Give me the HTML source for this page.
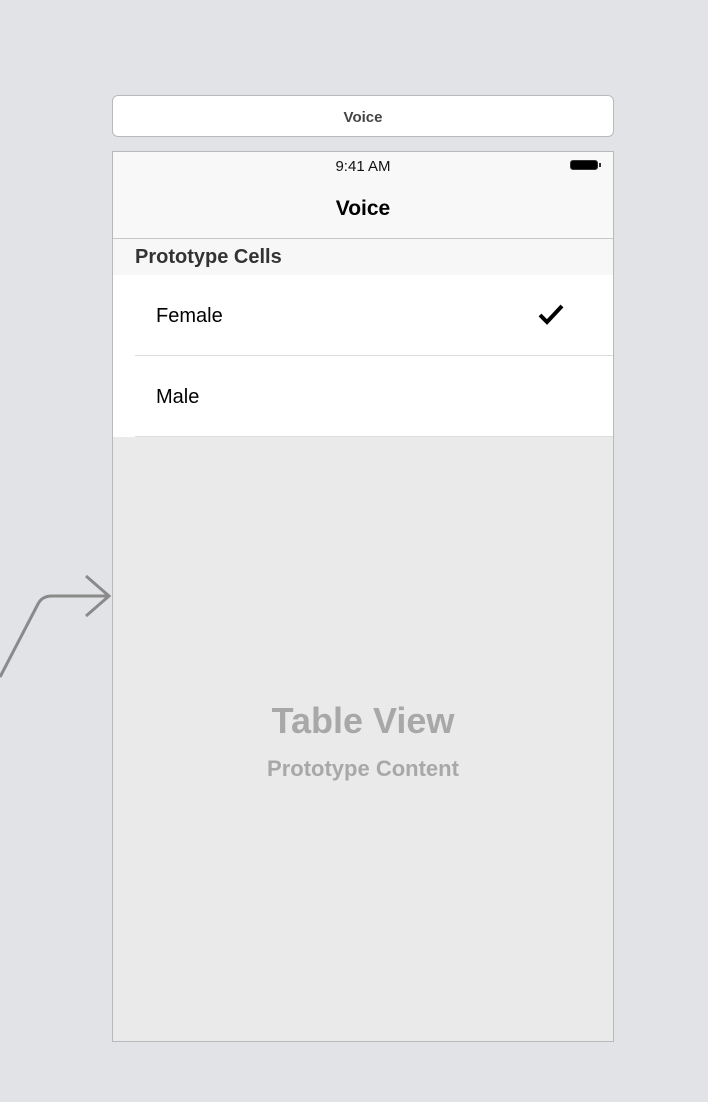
<!DOCTYPE html>
<html><head><style>
body{margin:0;width:708px;height:1102px;background:#e2e3e7;position:relative;font-family:"Liberation Sans",sans-serif;overflow:hidden}
.a{position:absolute}
</style></head><body>
<div class="a" style="left:112px;top:95px;width:500px;height:40px;background:#fff;border:1px solid #b9b9bb;border-radius:6px;text-align:center;line-height:43px;font-size:15px;font-weight:bold;color:#444">Voice</div>
<div class="a" style="left:112px;top:151px;width:500px;height:889px;background:#eaeaea;border:1px solid #b9b9bb;overflow:hidden">
 <div class="a" style="left:0;top:0;width:500px;height:86px;background:#f8f8f8;border-bottom:1px solid #c8c8c8"></div>
 <div class="a" style="left:0;top:6px;width:500px;text-align:center;font-size:15px;color:#111">9:41 AM</div>
 <div class="a" style="left:457px;top:8px;width:28px;height:10px;border:1px solid #333;border-radius:3px;box-sizing:border-box;background:#000"></div>
 <div class="a" style="left:486px;top:11px;width:2px;height:4px;background:#333"></div>
 <div class="a" style="left:0;top:45px;width:500px;text-align:center;font-size:21px;font-weight:bold;color:#000">Voice</div>
 <div class="a" style="left:0;top:87px;width:500px;height:36px;background:#f7f7f7"></div>
 <div class="a" style="left:22px;top:94px;font-size:20px;font-weight:bold;color:#333">Prototype Cells</div>
 <div class="a" style="left:0;top:123px;width:500px;height:162px;background:#fff"></div>
 <div class="a" style="left:22px;top:203px;width:478px;height:1px;background:#ddd"></div>
 <div class="a" style="left:22px;top:284px;width:478px;height:1px;background:#ddd"></div>
 <div class="a" style="left:43px;top:153px;font-size:20px;color:#000">Female</div>
 <div class="a" style="left:43px;top:234px;font-size:20px;color:#000">Male</div>
 <svg class="a" style="left:424px;top:150px" width="30" height="26"><path d="M3 13 L10 20 L25 4" stroke="#000" stroke-width="4" fill="none"/></svg>
 <div class="a" style="left:0;top:548px;width:500px;text-align:center;font-size:36px;font-weight:bold;color:#a8a8a8">Table View</div>
 <div class="a" style="left:0;top:604px;width:500px;text-align:center;font-size:22px;font-weight:bold;color:#a8a8a8">Prototype Content</div>
</div>
<svg class="a" style="left:0;top:0" width="120" height="700"><path d="M0 677 L38 604 Q42 596 52 596 L109 596 M86 576 L109 596 L86 616" stroke="#8a8a8a" stroke-width="3" fill="none"/></svg>
</body></html>
